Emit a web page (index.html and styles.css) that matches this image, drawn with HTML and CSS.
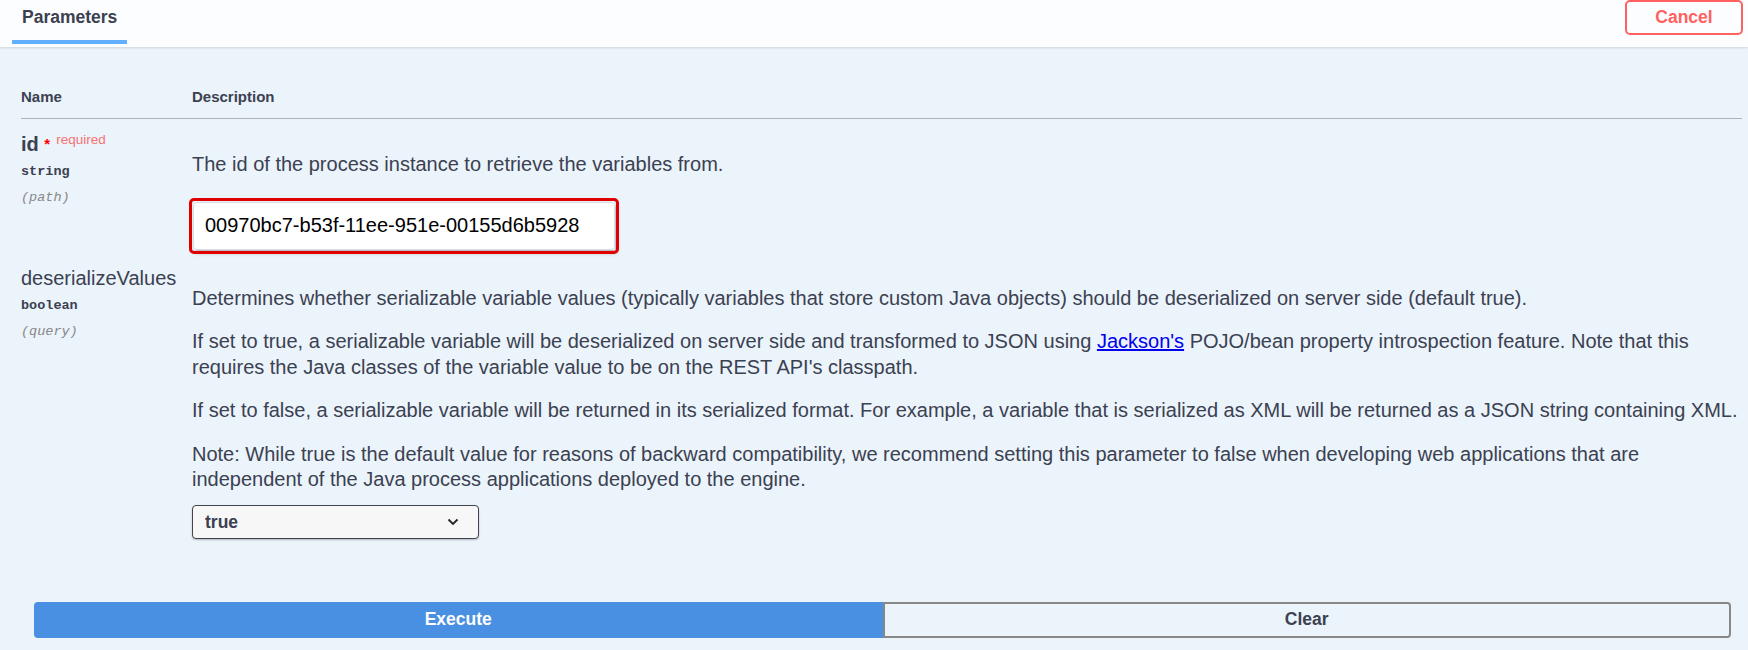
FILE: index.html
```html
<!DOCTYPE html>
<html>
<head>
<meta charset="utf-8">
<link rel="stylesheet" href="styles.css">
</head>
<body>
<div class="section-header">
  <div class="tab"><span class="tab-label">Parameters</span></div>
  <button class="btn-cancel">Cancel</button>
</div>
<div class="params">
  <div class="params-head">
    <div class="col-name">Name</div>
    <div class="col-desc">Description</div>
  </div>
  <div class="param-row">
    <div class="col-name">
      <div class="param-name required">id <span class="star">*</span><span class="req">required</span></div>
      <div class="param-type">string</div>
      <div class="param-in">(path)</div>
    </div>
    <div class="col-desc">
      <p>The id of the process instance to retrieve the variables from.</p>
      <div class="input-wrap"><input class="text-input" type="text" value="00970bc7-b53f-11ee-951e-00155d6b5928"></div>
    </div>
  </div>
  <div class="param-row">
    <div class="col-name">
      <div class="param-name">deserializeValues</div>
      <div class="param-type">boolean</div>
      <div class="param-in">(query)</div>
    </div>
    <div class="col-desc">
      <p>Determines whether serializable variable values (typically variables that store custom Java objects) should be deserialized on server side (default true).</p>
      <p>If set to true, a serializable variable will be deserialized on server side and transformed to JSON using <a href="#">Jackson's</a> POJO/bean property introspection feature. Note that this requires the Java classes of the variable value to be on the REST API's classpath.</p>
      <p>If set to false, a serializable variable will be returned in its serialized format. For example, a variable that is serialized as XML will be returned as a JSON string containing XML.</p>
      <p class="last">Note: While true is the default value for reasons of backward compatibility, we recommend setting this parameter to false when developing web applications that are independent of the Java process applications deployed to the engine.</p>
      <div class="select-wrap">
        <select class="select"><option>true</option><option>false</option></select>
        <svg class="chevron" width="12" height="8" viewBox="0 0 12 8"><path d="M1.5 1.5 L6 6 L10.5 1.5" fill="none" stroke="#222" stroke-width="1.8"/></svg>
      </div>
    </div>
  </div>
</div>
<div class="execute-wrapper">
  <button class="btn btn-execute">Execute</button>
  <button class="btn btn-clear">Clear</button>
</div>
</body>
</html>
```
FILE: styles.css
```css
html, body {
  margin: 0;
  padding: 0;
}
body {
  background: #ebf3fb;
  font-family: "Liberation Sans", Arial, sans-serif;
  color: #3b4151;
  width: 1748px;
  height: 650px;
  overflow: hidden;
}
.section-header {
  height: 47px;
  background: #fcfdfe;
  box-shadow: 0 1px 2px rgba(0, 0, 0, 0.12);
  display: flex;
  justify-content: space-between;
  align-items: flex-start;
  padding: 0 5px 0 12px;
  position: relative;
}
.tab {
  height: 40px;
  padding: 0 10px;
  border-bottom: 4px solid #61affe;
  box-sizing: content-box;
}
.tab-label {
  display: block;
  font-size: 17.5px;
  font-weight: bold;
  line-height: 20px;
  padding-top: 7px;
}
.btn-cancel {
  width: 118px;
  height: 35px;
  margin-top: 0;
  background: transparent;
  border: 2px solid #ff6060;
  border-radius: 5px;
  color: #ff6060;
  font-family: "Liberation Sans", Arial, sans-serif;
  font-size: 17.5px;
  font-weight: bold;
  padding: 0;
}
.params {
  padding: 0 6px 0 21px;
}
.params-head {
  display: flex;
  padding: 41px 0 12px;
  border-bottom: 1px solid #aeb3bb;
  font-size: 15px;
  font-weight: bold;
  line-height: 18px;
}
.col-name {
  width: 171px;
  flex: none;
}
.col-desc {
  flex: 1;
  min-width: 0;
}
.param-row {
  display: flex;
}
.param-row .col-name {
  padding-top: 11px;
}
.param-row .col-desc {
  padding-top: 13px;
}
.param-name {
  font-size: 20px;
  line-height: 28px;
  height: 28px;
  white-space: nowrap;
}
.param-name.required {
  font-weight: bold;
}
.star {
  color: #f00;
  font-size: 15px;
  position: relative;
  top: -2px;
}
.req {
  color: #f87272;
  font-size: 13.5px;
  font-weight: normal;
  position: relative;
  top: -7px;
  padding-left: 6px;
}
.param-type {
  font-family: "Liberation Mono", "DejaVu Sans Mono", monospace;
  font-size: 13.5px;
  font-weight: bold;
  line-height: 20px;
  padding: 4px 0 6px;
}
.param-in {
  font-family: "Liberation Mono", "DejaVu Sans Mono", monospace;
  font-size: 13.5px;
  font-style: italic;
  color: #888;
  line-height: 20px;
}
.col-desc p {
  font-size: 20px;
  line-height: 25.5px;
  margin: 18px 0;
}
.col-desc p:first-child {
  margin-top: 20px;
}
.col-desc p.last {
  margin-bottom: 0;
}
.col-desc a {
  color: #00e;
}
.input-wrap {
  display: inline-block;
  margin-left: 1px;
  margin-top: 6px;
  margin-bottom: 3px;
  outline: 3px solid #e00000;
  outline-offset: 1px;
  box-shadow: 2px 3px 4px rgba(0, 0, 0, 0.25);
  border-radius: 1px;
}
.text-input {
  display: block;
  width: 422px;
  height: 48px;
  box-sizing: border-box;
  border: 1px solid #d9dee5;
  border-radius: 4px;
  background: #fff;
  padding: 0 11px;
  font-family: "Liberation Sans", Arial, sans-serif;
  font-size: 20px;
  color: #000;
}
.select-wrap {
  position: relative;
  width: 287px;
  margin-top: 12px;
  margin-bottom: 63px;
}
.select {
  display: block;
  width: 287px;
  height: 34px;
  appearance: none;
  -webkit-appearance: none;
  background: #f7f7f7;
  border: 1px solid #41444e;
  border-radius: 4px;
  box-shadow: 0 1px 2px rgba(0, 0, 0, 0.25);
  padding: 0 12px;
  font-family: "Liberation Sans", Arial, sans-serif;
  font-size: 17.5px;
  font-weight: bold;
  color: #3b4151;
}
.chevron {
  position: absolute;
  right: 20px;
  top: 13px;
  pointer-events: none;
}
.execute-wrapper {
  display: flex;
  padding: 0 17px 0 34px;
}
.btn {
  flex: 1;
  height: 36px;
  font-family: "Liberation Sans", Arial, sans-serif;
  font-size: 17.5px;
  font-weight: bold;
  padding: 0;
}
.btn-execute {
  background: #4990e2;
  color: #fff;
  border: 2px solid #4990e2;
  border-radius: 4px 0 0 4px;
}
.btn-clear {
  background: transparent;
  color: #3b4151;
  border: 2px solid #888;
  border-radius: 0 4px 4px 0;
}
```
